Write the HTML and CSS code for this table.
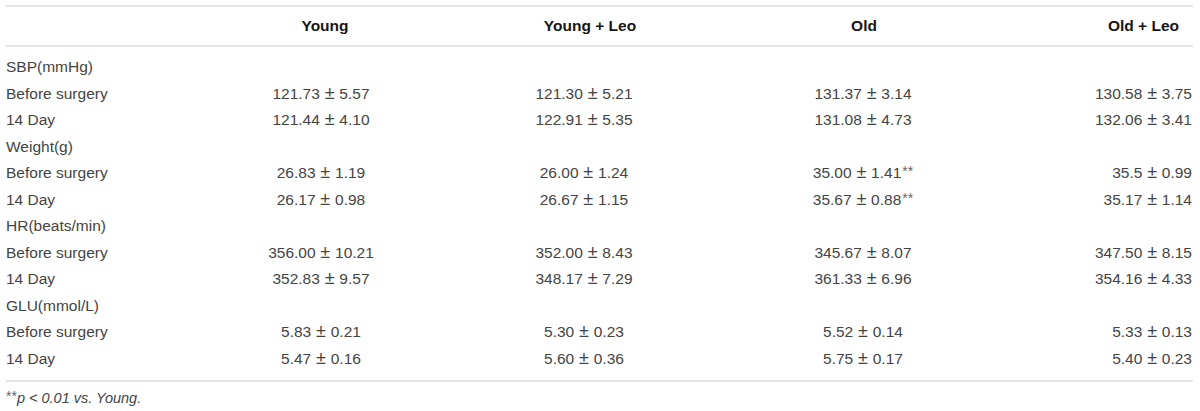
FILE: index.html
```html
<!DOCTYPE html>
<html>
<head>
<meta charset="utf-8">
<link rel="stylesheet" href="styles.css">
</head>
<body>
<div class="wrap">
  <table class="data">
    <colgroup>
      <col class="c1"><col class="c2"><col class="c3"><col class="c4"><col class="c5">
    </colgroup>
    <thead>
      <tr>
        <th></th>
        <th class="h-young">Young</th>
        <th class="h-yleo">Young + Leo</th>
        <th class="h-old">Old</th>
        <th class="h-oleo">Old + Leo</th>
      </tr>
    </thead>
    <tbody>
      <tr class="first"><td>SBP(mmHg)</td><td></td><td></td><td></td><td></td></tr>
      <tr><td>Before surgery</td><td>121.73 <span class="pm">±</span> 5.57</td><td>121.30 <span class="pm">±</span> 5.21</td><td>131.37 <span class="pm">±</span> 3.14</td><td>130.58 <span class="pm">±</span> 3.75</td></tr>
      <tr><td>14 Day</td><td>121.44 <span class="pm">±</span> 4.10</td><td>122.91 <span class="pm">±</span> 5.35</td><td>131.08 <span class="pm">±</span> 4.73</td><td>132.06 <span class="pm">±</span> 3.41</td></tr>
      <tr><td>Weight(g)</td><td></td><td></td><td></td><td></td></tr>
      <tr><td>Before surgery</td><td>26.83 <span class="pm">±</span> 1.19</td><td>26.00 <span class="pm">±</span> 1.24</td><td>35.00 <span class="pm">±</span> 1.41<sup class="ast">**</sup></td><td>35.5 <span class="pm">±</span> 0.99</td></tr>
      <tr><td>14 Day</td><td>26.17 <span class="pm">±</span> 0.98</td><td>26.67 <span class="pm">±</span> 1.15</td><td>35.67 <span class="pm">±</span> 0.88<sup class="ast">**</sup></td><td>35.17 <span class="pm">±</span> 1.14</td></tr>
      <tr><td>HR(beats/min)</td><td></td><td></td><td></td><td></td></tr>
      <tr><td>Before surgery</td><td>356.00 <span class="pm">±</span> 10.21</td><td>352.00 <span class="pm">±</span> 8.43</td><td>345.67 <span class="pm">±</span> 8.07</td><td>347.50 <span class="pm">±</span> 8.15</td></tr>
      <tr><td>14 Day</td><td>352.83 <span class="pm">±</span> 9.57</td><td>348.17 <span class="pm">±</span> 7.29</td><td>361.33 <span class="pm">±</span> 6.96</td><td>354.16 <span class="pm">±</span> 4.33</td></tr>
      <tr><td>GLU(mmol/L)</td><td></td><td></td><td></td><td></td></tr>
      <tr><td>Before surgery</td><td>5.83 <span class="pm">±</span> 0.21</td><td>5.30 <span class="pm">±</span> 0.23</td><td>5.52 <span class="pm">±</span> 0.14</td><td>5.33 <span class="pm">±</span> 0.13</td></tr>
      <tr class="last"><td>14 Day</td><td>5.47 <span class="pm">±</span> 0.16</td><td>5.60 <span class="pm">±</span> 0.36</td><td>5.75 <span class="pm">±</span> 0.17</td><td>5.40 <span class="pm">±</span> 0.23</td></tr>
    </tbody>
  </table>
  <p class="note"><sup class="ast">**</sup><em>p</em> <em>&lt; 0.01 vs. Young.</em></p>
</div>
</body>
</html>
```

FILE: styles.css
```css
html, body {
  margin: 0;
  padding: 0;
  background: #ffffff;
}

body {
  font-family: "Liberation Sans", Arial, sans-serif;
  font-size: 15.5px;
  color: #444444;
}

.wrap {
  margin: 5px 0 0 6px;
  width: 1187px;
}

.data {
  width: 1187px;
  table-layout: fixed;
  border-collapse: collapse;
  border-top: 2px solid #e4e4e4;
  border-bottom: 2px solid #e4e4e4;
}

.c1 { width: 184px; }
.c2 { width: 262px; }
.c3 { width: 264px; }
.c4 { width: 294px; }
.c5 { width: 183px; }

.data thead th {
  height: 38px;
  padding: 0;
  font-weight: bold;
  color: #161616;
  text-align: center;
  border-bottom: 2px solid #e4e4e4;
  line-height: 20px;
}

.data th.h-young { padding-left: 8px; }
.data th.h-yleo { padding-left: 12px; }
.data th.h-old { padding-left: 2px; }
.data th.h-oleo { text-align: right; padding-right: 14px; }

.data td {
  height: 26.5px;
  padding: 0;
  line-height: 20px;
  text-align: center;
  white-space: nowrap;
  vertical-align: middle;
}

.data td + td { word-spacing: 0.5px; }

.pm {
  font-size: 18px;
  line-height: 0;
}

.data td:first-child { text-align: left; }
.data td:last-child { text-align: right; padding-right: 1px; }

.data tr.first td { padding-top: 7px; }
.data tr.last td { padding-bottom: 8px; }

.ast {
  font-size: 14px;
  color: #666666;
  vertical-align: 2px;
  line-height: 0;
  margin-left: 1px;
}

.note {
  margin: 6px 0 0 0;
  font-size: 14.5px;
  line-height: 20px;
  color: #444444;
}

.note .ast { margin-left: 0; }

.note em { font-style: italic; }
```
